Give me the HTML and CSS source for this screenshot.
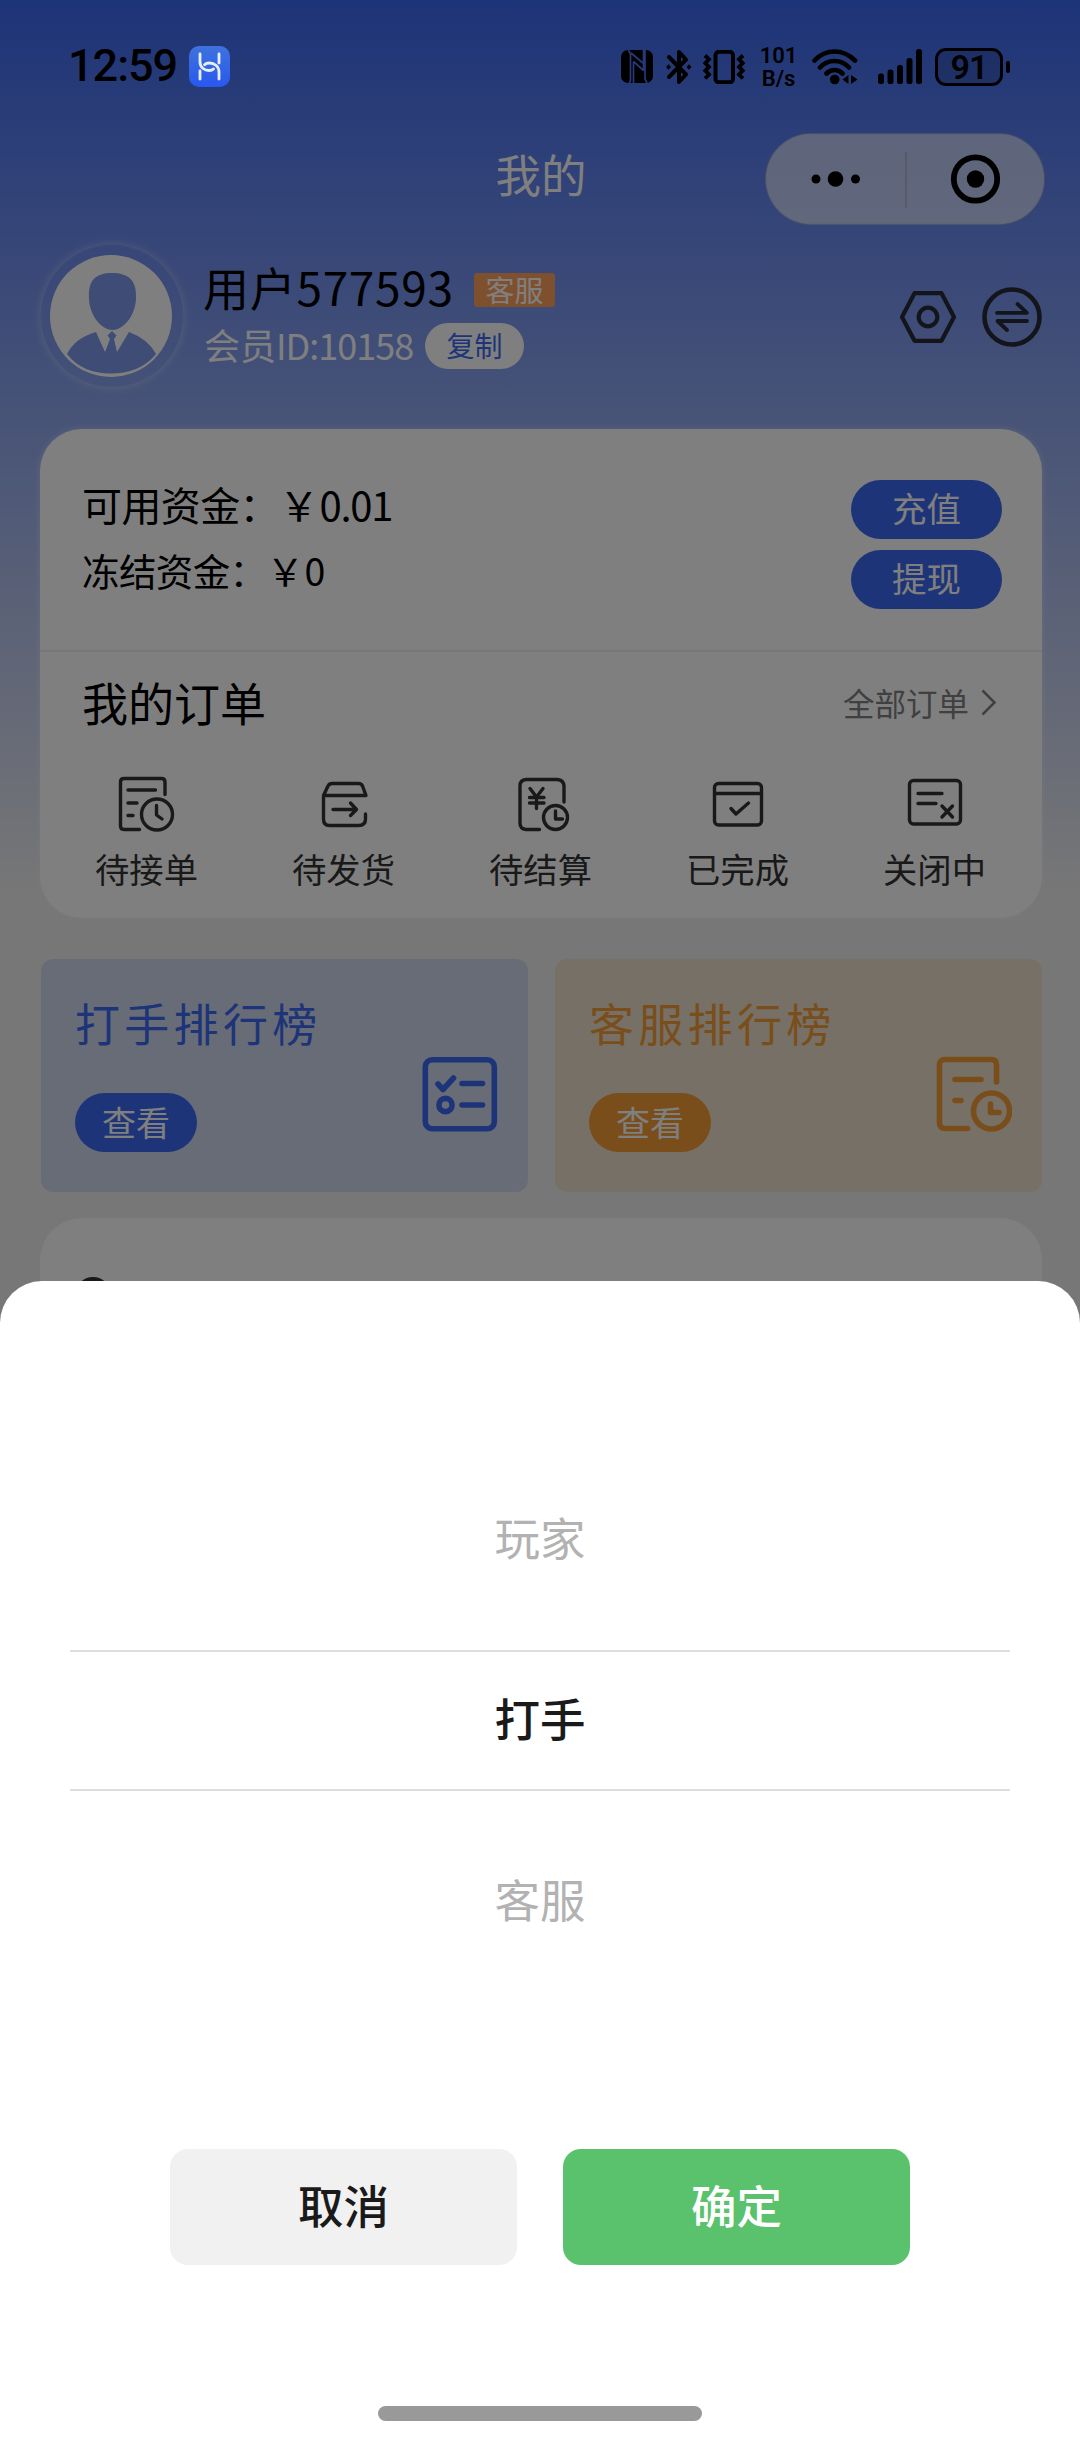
FILE: index.html
```html
<!DOCTYPE html>
<html lang="zh-CN">
<head>
<meta charset="utf-8">
<title>我的</title>
<link rel="stylesheet" href="styles.css">
</head>
<body>
<div class="screen">
  <header class="status">
    <span class="clock">12:59</span>
    <svg class="app-badge" width="41" height="41" viewBox="0 0 41 41">
      <defs><linearGradient id="badge" x1="0" y1="0" x2="0" y2="1"><stop offset="0" stop-color="#3f72dc"/><stop offset="1" stop-color="#2858f0"/></linearGradient></defs>
      <rect width="41" height="41" rx="10" fill="url(#badge)"/>
      <g fill="none" stroke="#e6efff" stroke-width="2.8" stroke-linecap="round">
        <path d="M11 8v8c0 6 5 8.500 9 8.500 2 0 3.500-.5 4.500-1.500M30 33v-7c0-6-5-9-9.500-9-2.500 0-4 .7-5 1.800"/>
        <path d="M30 8v9M11 25v8"/>
      </g>
    </svg>
    <div class="status-icons">
      <svg width="32" height="33" viewBox="0 0 32 33">
        <rect width="32" height="33" rx="7"/>
        <path d="M7.500 0 9.500 4V30Q9.500 32 8 33M10 3 22.500 13.500M12.500 11.500 22.500 20.500M12.500 11.500V33M22.500 0V21M24 0V29L26 33" fill="none" stroke="#25397a" stroke-width="1.700"/>
      </svg>
      <svg class="bt" width="26" height="36" viewBox="0 0 26 36">
        <path d="M3 8 20 25.500 13 33V3L20 10.500 3 28" fill="none" stroke="#000" stroke-width="4" stroke-linejoin="round" stroke-linecap="round"/>
        <path d="M0 18l2.500-2.800L5 18l-2.500 2.800ZM20.500 18l2.500-2.800 2.500 2.800-2.500 2.800Z"/>
      </svg>
      <svg class="vib" width="42" height="34" viewBox="0 0 42 34">
        <rect x="12.500" y="1.800" width="17.500" height="30.500" rx="3.500" fill="none" stroke="#000" stroke-width="4"/>
        <path d="M2 5.500l4 3.800-3.700 3.800 3.700 3.800-3.700 3.800 3.700 3.800L2 28.500M40 5.500l-4 3.800 3.700 3.800-3.700 3.800 3.700 3.800-3.700 3.800 4 4" fill="none" stroke="#000" stroke-width="3.800"/>
      </svg>
      <span class="speed"><span>101</span><span>B/s</span></span>
      <svg class="wifi" width="46" height="36" viewBox="812 49 46 36">
        <g fill="none" stroke="#000" stroke-width="4.600" stroke-linecap="round">
          <path d="M814.500 60.500Q823 51.500 834.500 51.500T855 60.500M820 67.500Q826 61 834.500 61T849 67.500M826.500 73.500Q830 70 834.500 70T842.500 73.500"/>
        </g>
        <circle cx="834.700" cy="79.500" r="4.800"/>
        <path d="M842.500 79.500l6-4.500v9ZM857.500 79.500l-6.500-4.500v9Z"/>
      </svg>
      <svg class="signal" width="44" height="35" viewBox="0 0 44 35">
        <rect x="0" y="24.500" width="6" height="10.500" rx="2.500"/><rect x="9.500" y="20.500" width="6" height="14.500" rx="2.500"/><rect x="19" y="16" width="6" height="19" rx="2.500"/><rect x="28.500" y="9" width="6" height="26" rx="2.500"/><rect x="38" y="0" width="6" height="35" rx="2.500"/>
      </svg>
      <span class="battery">91</span><span class="nub"></span>
    </div>
  </header>

  <div class="nav">
    <h1 class="nav-title">我的</h1>
    <svg class="capsule" width="280" height="92" viewBox="0 0 280 92">
      <rect x=".75" y=".75" width="278.500" height="90.500" rx="45.250" fill="#fff" fill-opacity=".6" stroke="#bbb" stroke-opacity=".4" stroke-width="1.500"/>
      <circle cx="51" cy="46" r="4.500"/><circle cx="70.500" cy="46" r="7.800"/><circle cx="90.500" cy="46" r="4.500"/>
      <path d="M141 19v56" stroke="#a6adc8" stroke-width="1.500"/>
      <circle cx="210.500" cy="46" r="21.700" fill="none" stroke="#000" stroke-width="5.800"/><circle cx="210.500" cy="46" r="8.700"/>
    </svg>
  </div>

  <section class="profile">
    <div class="avatar">
      <svg width="122" height="122" viewBox="0 0 122 122">
        <circle cx="61" cy="61" r="61" fill="#fff"/>
        <path d="M39 43C38 25 46 18 62 18S87 25 86 43C86 58 75 75 62.500 75S39 58 39 43Z" fill="#7c98ec"/>
        <path d="M17 99Q25 83 46 77L55 97 60 84 57.500 80.500 62 76 66.500 80.500 64 84 67 97 79 77Q98 84 106 99Q90 118.500 61 118.500T17 99Z" fill="#7c98ec"/>
      </svg>
    </div>
    <div class="who">
      <div class="who-row"><span class="name">用户577593</span><span class="role">客服</span></div>
      <div class="who-row"><span class="uid">会员<span class="digits">ID:10158</span></span><button class="copy">复制</button></div>
    </div>
    <svg class="tool-hex" width="56" height="52" viewBox="0 0 56 52"><g fill="none" stroke="#262b35" stroke-width="4.200" stroke-linejoin="round"><path d="M14.500 2.200h27L54 26 41.500 49.800h-27L2 26Z"/><circle cx="28" cy="26" r="9.300"/></g></svg>
    <svg class="tool-swap" width="60" height="60" viewBox="0 0 60 60"><g fill="none" stroke="#262b35" stroke-width="4.600" stroke-linecap="round" stroke-linejoin="round"><circle cx="30" cy="30" r="27.500"/><path d="M15 25.800h30L35.500 17" stroke-width="3.800"/><path d="M45 34H15.500l9.500 9" stroke-width="3.800"/></g></svg>
  </section>

  <section class="card account">
    <div class="funds">
      <div class="fund-lines">
        <p class="fund-main">可用资金：<span class="yen">￥</span><span class="amount">0.01</span></p>
        <p class="fund-frozen">冻结资金：<span class="yen">￥</span><span class="amount">0</span></p>
      </div>
      <div class="fund-actions"><button class="pill">充值</button><button class="pill">提现</button></div>
    </div>
    <div class="orders-head">
      <h2>我的订单</h2>
      <span class="all">全部订单<svg width="16" height="27" viewBox="0 0 16 27"><path d="M1.500 1.500 13.500 13.500 1.500 25.500" fill="none" stroke="#808080" stroke-width="2.500"/></svg></span>
    </div>
    <div class="orders">
      <div class="order">
        <svg viewBox="118 774 60 60"><path d="M140.500 829.500H125q-3.500 0-3.500-3.500V782q0-3.500 3.500-3.500h37.500q3.500 0 3.500 3.500v12.500M129 790h27.500M129 803h9M129 815.500h5"/><circle cx="158" cy="814.500" r="15.500"/><path d="M157.500 805.500v9.500l5.500 4"/></svg>
        <span>待接单</span>
      </div>
      <div class="order">
        <svg viewBox="314 774 60 60"><path d="M323.500 795.500 328 786q1.500-2.500 4-2.500h26.500q3 0 4 2.500l3.500 9.500h-42.500V819q0 6.500 6 6.500h29q7 0 7-6.500v-5M333 809.500h23M350.500 803l6 6.500-6 6"/></svg>
        <span>待发货</span>
      </div>
      <div class="order">
        <svg viewBox="511 774 60 60"><path d="M539.500 829.500H526q-6-.5-6-6.500V786q0-6 6-6.500h31.500q6 .5 6.500 6.500v16M530 788.500l6.500 8.500 6.500-8.500M536.500 797v11.500M529.500 797.500h14.500M529.500 803h14.500"/><circle cx="555.500" cy="817.500" r="12"/><path d="M555.500 811v8h7"/></svg>
        <span>待结算</span>
      </div>
      <div class="order">
        <svg viewBox="708 774 60 60"><rect x="714.500" y="783.500" width="47" height="41.500" rx="4"/><path d="M714.500 793.500h47M731 808.500l5 5.500 12.500-11"/></svg>
        <span>已完成</span>
      </div>
      <div class="order">
        <svg viewBox="905 774 60 60"><rect x="909.500" y="780.500" width="51" height="43.500" rx="4"/><path d="M918 793.500h24M918 803.500h18M942 806l10.500 11M952.500 806 942 817"/></svg>
        <span>关闭中</span>
      </div>
    </div>
  </section>

  <section class="ranks">
    <div class="rank rank-blue">
      <h3>打手排行榜</h3>
      <div class="rank-foot"><button class="see">查看</button>
        <svg width="76" height="76" viewBox="0 0 76 76"><g fill="none" stroke="#3c68f0" stroke-width="5.600" stroke-linecap="round" stroke-linejoin="round"><rect x="3.300" y="3.700" width="69" height="69" rx="7"/><path d="M16 28l5 5.500L31.500 22M40 27.500h20.500M40 49h20.500"/><circle cx="23.500" cy="49" r="6.600"/></g></svg></div>
    </div>
    <div class="rank rank-orange">
      <h3>客服排行榜</h3>
      <div class="rank-foot"><button class="see">查看</button>
        <svg width="76" height="76" viewBox="0 0 76 76"><g fill="none" stroke="#f49c36" stroke-width="5.600" stroke-linecap="round" stroke-linejoin="round"><path d="M31.500 72.500H9q-5.500 0-5.500-5.500V9q0-5.500 5.500-5.500h46.500q5 0 5 5.500v17M19 23.500h26M19 44.500h6"/><circle cx="55.500" cy="55" r="18"/><path d="M54.500 48v8.500h8.500"/></g></svg></div>
    </div>
  </section>

  <section class="card more">
    <svg width="36" height="36" viewBox="0 0 36 36"><circle cx="18" cy="18" r="16" fill="none" stroke="#333" stroke-width="4"/></svg>
  </section>

  <div class="mask"></div>

  <div class="sheet">
    <div class="picker">
      <div class="option">玩家</div>
      <div class="option chosen">打手</div>
      <div class="option">客服</div>
    </div>
    <div class="sheet-actions"><button class="cancel">取消</button><button class="ok">确定</button></div>
    <div class="home-bar"></div>
  </div>
</div>
</body>
</html>
```
FILE: styles.css
```css
* { box-sizing: border-box; margin: 0; padding: 0; }
body { font-family: "Noto Sans CJK SC", sans-serif; color: #000; }
button { border: 0; font: inherit; display: flex; align-items: center; justify-content: center; }
h1, h2, h3 { font-weight: 400; }
svg { display: block; flex: none; }

.screen {
  position: relative; width: 1080px; height: 2438px; overflow: hidden;
  background: linear-gradient(#3c68f0, #eeeeee 890px) #eee;
}

/* status bar stays above the dimming mask */
.status { position: relative; z-index: 2; height: 133px; padding: 0 70px 0 68px; display: flex; align-items: center; }
.clock { font: 500 45px/1 Roboto, sans-serif; width: 121px; letter-spacing: -1px; margin-top: -2px; }
.status-icons { margin-left: auto; display: flex; align-items: center; }
.bt { margin-left: 13px; }
.vib { margin-left: 11px; }
.speed { margin-left: 14px; width: 39px; display: flex; flex-direction: column; align-items: center; font: 600 22px/23px Roboto, sans-serif; }
.speed span { height: 23px; }
.wifi { margin-left: 14px; }
.signal { margin-left: 20px; }
.battery { margin-left: 13px; width: 68px; height: 38px; border: 3px solid #000; border-radius: 11px; display: flex; align-items: center; justify-content: center; font: 600 34px/1 Roboto, sans-serif; letter-spacing: -1px; background: rgba(0, 0, 0, .15); }
.nub { margin-left: 3px; width: 4px; height: 12px; border-radius: 2px; background: #000; }

.nav { height: 92px; padding: 0 35px 0 37px; display: grid; grid-template-columns: 1fr auto 1fr; align-items: center; }
.nav-title { grid-column: 2; color: #fff; font-size: 45.500px; line-height: 60px; margin-top: -13px; }
.capsule { justify-self: end; }

.profile { height: 204px; padding: 19px 38px 0 40px; display: flex; align-items: flex-start; }
.avatar { width: 144px; height: 144px; border-radius: 50%; display: flex; align-items: center; justify-content: center; padding-right: 2px; box-shadow: 0 0 9px rgba(255, 255, 255, .35), inset 0 0 2px rgba(255, 255, 255, .45); }
.who { margin: 18px auto 0 20px; }
.who-row { height: 56px; display: flex; align-items: center; white-space: nowrap; }
.name { font-size: 46px; line-height: 56px; letter-spacing: .7px; margin: -8px 0 0 -1px; width: 271px; }
.role { width: 81px; height: 34px; background: #ffa05a; color: #fff; border-radius: 3px; font-size: 29px; line-height: 32px; text-align: center; }
.uid { font-size: 36px; line-height: 54px; color: #fff; width: 221px; margin-top: -5px; }
.digits { letter-spacing: -1px; }
.copy { width: 99px; height: 46px; border-radius: 23px; background: #fff; color: #3c68f0; font-size: 28px; padding-bottom: 2px; }
.tool-hex { margin: 47px 26px 0 0; }
.tool-swap { margin-top: 43px; }

.card { margin: 0 38px 0 40px; background: #fff; border-radius: 42px; }
.account { height: 489px; box-shadow: 0 0 6px rgba(255, 255, 255, .4); }
.funds { height: 223px; border-bottom: 2px solid #eee; padding: 51px 40px 0 42px; display: flex; justify-content: space-between; }
.fund-lines { margin-top: -1px; }
.fund-main { font-size: 40px; line-height: 50px; letter-spacing: -.6px; }
.fund-frozen { font-size: 37.500px; line-height: 50px; margin-top: 16px; letter-spacing: -.6px; }
.amount { letter-spacing: -1.200px; margin-left: 1px; }
.fund-actions { display: grid; gap: 11px; align-content: start; }
.pill { width: 151px; height: 59px; border-radius: 30px; background: #3c68f0; color: #fff; font-size: 34.500px; padding-bottom: 6px; }
.orders-head { height: 104px; padding: 0 45px 4px 42px; display: flex; align-items: center; justify-content: space-between; }
.orders-head h2 { font-size: 46px; line-height: 60px; margin-top: -3px; }
.all { display: flex; align-items: center; gap: 12px; font-size: 31.500px; color: #808080; }
.orders { padding: 18px 9px 0 8px; display: grid; grid-template-columns: repeat(5, 1fr); }
.order { display: flex; flex-direction: column; align-items: center; color: #333; font-size: 34.300px; line-height: 50px; }
.order svg { width: 60px; height: 60px; margin-bottom: 9px; fill: none; stroke: #333; stroke-width: 3.400; stroke-linecap: round; stroke-linejoin: round; }

.ranks { margin: 41px 38px 0 41px; display: grid; grid-template-columns: 1fr 1fr; gap: 27px; }
.rank { height: 233px; border-radius: 12px; padding: 36px 30px 0 34px; }
.rank h3 { font-size: 45px; line-height: 56px; letter-spacing: 4.300px; }
.rank-foot { display: flex; justify-content: space-between; }
.see { margin-top: 42px; width: 122px; height: 59px; border-radius: 30px; color: #fff; font-size: 34px; padding-bottom: 3px; }
.rank-foot svg { margin-top: 5px; }
.rank-blue { background: #cfd9ee; }
.rank-blue h3 { color: #3c68f0; }
.rank-blue .see { background: #3c68f0; }
.rank-orange { background: #eee0cc; }
.rank-orange h3 { color: #f49c36; }
.rank-orange .see { background: #f49c36; }
.more { margin-top: 26px; height: 400px; padding: 59px 35px; }

.mask { position: absolute; inset: 0; background: rgba(0, 0, 0, .5); z-index: 1; }

.sheet { position: absolute; left: 0; right: 0; bottom: 0; height: 1157px; z-index: 3; background: #fff; border-radius: 42px 42px 0 0; padding: 167px 70px 0; }
.picker { display: flex; flex-direction: column; }
.option { height: 182px; font-size: 45.500px; line-height: 176px; text-align: center; color: #b2b2b2; }
.option.chosen { height: 141px; margin: 20px 0 21px; line-height: 131px; border-top: 2px solid #ddd; border-bottom: 2px solid #ddd; color: #1a1a1a; font-weight: 500; }
.option:last-child { line-height: 173px; }
.sheet-actions { margin-top: 155px; display: flex; justify-content: center; gap: 46px; }
.sheet-actions button { width: 347px; height: 116px; border-radius: 18px; font-size: 45.500px; font-weight: 500; padding-bottom: 6px; }
.cancel { background: #f1f1f1; color: #1a1a1a; }
.ok { background: #5ac16c; color: #fff; }
.home-bar { width: 324px; height: 15px; border-radius: 7.500px; background: #999; margin: 141px auto 0; }
```
